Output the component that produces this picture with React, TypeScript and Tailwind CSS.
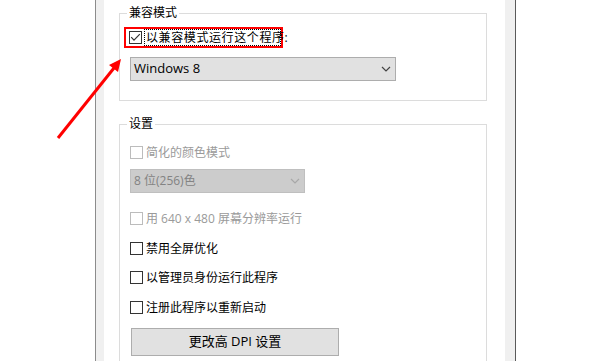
import React from 'react';

const FONT = "font-['Segoe_UI','Open_Sans','Noto_Sans_CJK_SC',sans-serif]";

function Box({ checked, disabled }: { checked?: boolean; disabled?: boolean }) {
  return (
    <div
      className={`w-[13px] h-[13px] shrink-0 border bg-white flex items-center justify-center ${
        disabled ? 'border-[#bcbcbc]' : 'border-[#333333]'
      }`}
    >
      {checked && (
        <svg width="11" height="11" viewBox="0 0 11 11">
          <polyline points="1.2,5.2 4,8.2 9.8,2.2" fill="none" stroke="#333" strokeWidth="1.2" />
        </svg>
      )}
    </div>
  );
}

function Chevron({ color }: { color: string }) {
  return (
    <svg width="10" height="6" viewBox="0 0 10 6">
      <polyline points="1,1 5,5 9,1" fill="none" stroke={color} strokeWidth="1.2" />
    </svg>
  );
}

function Row({ label, disabled }: { label: string; disabled?: boolean }) {
  return (
    <div className="flex items-center h-[13px] gap-[3px]">
      <Box disabled={disabled} />
      <span className={`text-[12px] leading-[13px] ${disabled ? 'text-[#9a9a9a]' : 'text-black'}`}>{label}</span>
    </div>
  );
}

function Group({ title, className, children }: { title: string; className: string; children: React.ReactNode }) {
  return (
    <div className={`relative border border-[#dcdcdc] ${className}`}>
      <span className="absolute left-[7px] top-[-9px] bg-white px-[2px] text-[12px] leading-[16px] text-black">
        {title}
      </span>
      {children}
    </div>
  );
}

export default function App() {
  return (
    <div className={`relative w-[600px] h-[361px] overflow-hidden bg-white flex ${FONT}`}>
      <div className="w-[95px] shrink-0" />
      <div className="w-[421px] shrink-0 flex border-l border-r border-l-[#8c8c8c] border-r-[#5a5a5a]">
        <div className="w-[8px] bg-[#f0f0f0]" />
        <div className="w-[401px] bg-white pl-[15px] pt-[13px]">
          <Group title="兼容模式" className="w-[368px] h-[88px] pt-[13px] pl-[4px]">
            <div className="w-[159px] h-[21px] border-2 border-[#ff0000] flex items-center pl-[3px]">
              <Box checked />
              <span className="ml-[2px] h-[17px] flex-1 min-w-0 border border-dotted border-black flex items-center pl-[1px] text-[12px] tracking-[0.6px] leading-[15px] text-black whitespace-nowrap">
                以兼容模式运行这个程序:
              </span>
            </div>
            <div className="mt-[9px] ml-[6px] w-[266px] h-[24px] bg-[#e1e1e1] border border-[#adadad] flex items-center justify-between pl-[3px] pr-[4px]">
              <span className="text-[13px] text-black">Windows 8</span>
              <Chevron color="#444" />
            </div>
          </Group>

          <Group title="设置" className="mt-[23px] w-[368px] h-[260px] pl-[10px] pt-[21px] flex flex-col">
            <Row label="简化的颜色模式" disabled />
            <div className="mt-[10px] w-[175px] h-[24px] bg-[#cccccc] border border-[#bfbfbf] flex items-center justify-between pl-[3px] pr-[4px]">
              <span className="text-[12px] text-[#838383]">8 位(256)色</span>
              <Chevron color="#a8a8a8" />
            </div>
            <div className="mt-[19px]">
              <Row label="用 640 x 480 屏幕分辨率运行" disabled />
            </div>
            <div className="mt-[17px]">
              <Row label="禁用全屏优化" />
            </div>
            <div className="mt-[16px]">
              <Row label="以管理员身份运行此程序" />
            </div>
            <div className="mt-[17px]">
              <Row label="注册此程序以重新启动" />
            </div>
            <button className="mt-[14px] ml-[1px] w-[208px] h-[28px] bg-[#e1e1e1] border border-[#adadad] text-[13px] text-black flex items-center justify-center">
              更改高 DPI 设置
            </button>
          </Group>
        </div>
        <div className="w-[10px] bg-[#f0f0f0]" />
      </div>
      <div className="flex-1" />

      <svg className="absolute left-0 top-0 pointer-events-none" width="600" height="361" viewBox="0 0 600 361">
        <line x1="58" y1="138" x2="114" y2="68" stroke="#ff0000" strokeWidth="3" />
        <polygon points="121,59 118,72 109,65" fill="#ff0000" />
      </svg>
    </div>
  );
}
